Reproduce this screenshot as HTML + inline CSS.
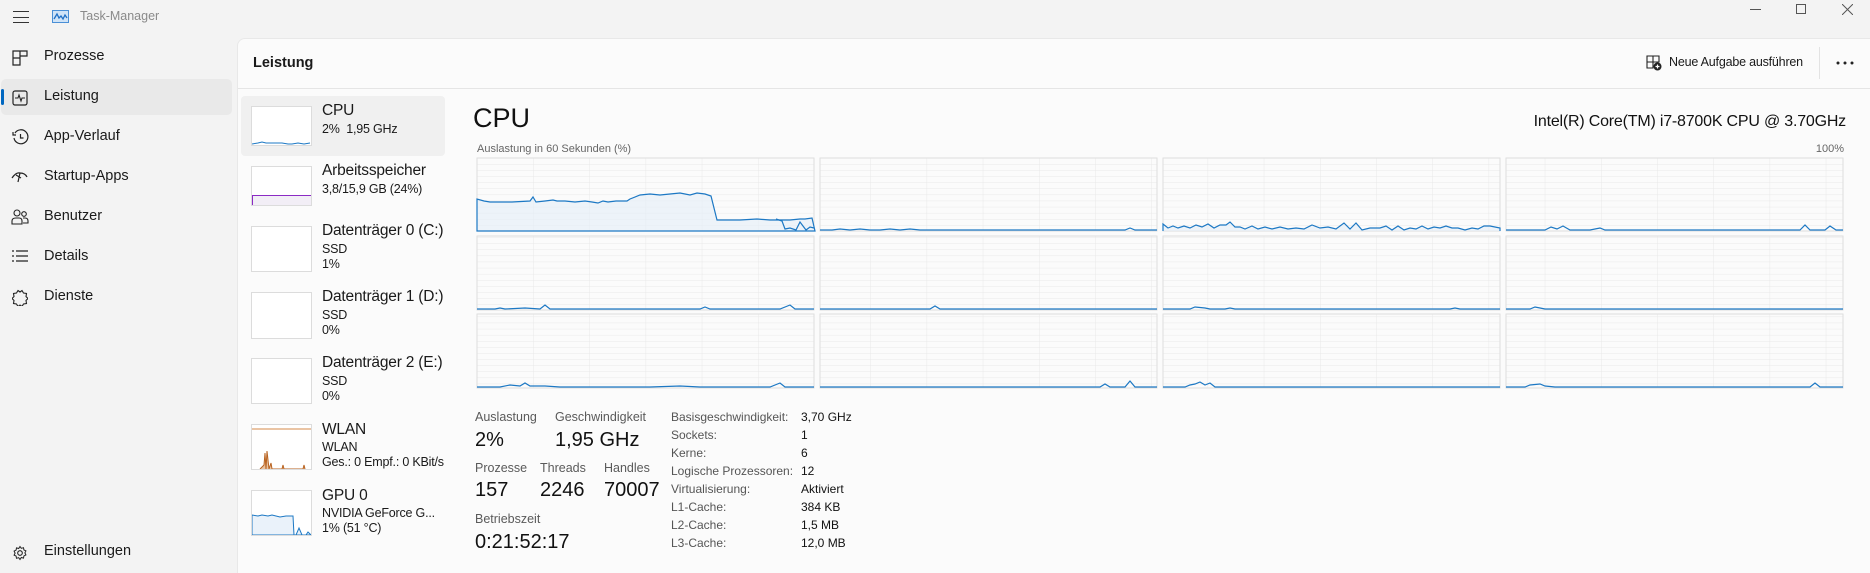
<!DOCTYPE html>
<html><head><meta charset="utf-8"><style>
*{margin:0;padding:0;box-sizing:border-box}
body{width:1870px;height:573px;overflow:hidden;background:#f3f3f3;font-family:"Segoe UI","Liberation Sans",sans-serif;color:#1a1a1a;position:relative}
.a{position:absolute;white-space:nowrap}
.nav{font-size:14.5px;color:#1a1a1a}
.panel{position:absolute;left:237px;top:38px;width:1633px;height:535px;background:#fbfbfb;border-top-left-radius:8px;border:1px solid #e8e8e8;border-right:none;border-bottom:none}
.t1{font-size:15.5px;color:#1a1a1a;letter-spacing:-0.2px}
.t2{font-size:12.5px;color:#1a1a1a;letter-spacing:-0.2px}
.thumb{position:absolute;left:251px;width:61px;background:#fff;border:1px solid #dcdcdc}
.lbl{font-size:12.5px;color:#5a5a5a}
.val{font-size:20px;color:#111}
.k{font-size:12px;color:#555}
.v{font-size:12px;color:#111}
</style></head><body>
<div class="a" style="left:13px;top:11px;width:16px;height:12px;border-top:1.3px solid #333;border-bottom:1.3px solid #333"></div>
<div class="a" style="left:13px;top:16.5px;width:16px;height:1.3px;background:#333"></div>
<svg class="a" style="left:52px;top:10px" width="17" height="13" viewBox="0 0 17 13"><rect x="0.5" y="0.5" width="16" height="12" fill="#cfe3f7" stroke="#4a8fd6"/><polyline points="2,9 5,4 7,8 9,6 11,9 13,5 15,8" fill="none" stroke="#1f6fc5" stroke-width="1.3"/></svg>
<div class="a" style="left:80px;top:9px;font-size:12.5px;color:#8a8a8a">Task-Manager</div>
<div class="a" style="left:1750px;top:9px;width:11px;height:1px;background:#555"></div>
<div class="a" style="left:1796px;top:4px;width:10px;height:10px;border:1px solid #555"></div>
<svg class="a" style="left:1842px;top:4px" width="11" height="11"><path d="M0 0L11 11M11 0L0 11" stroke="#555" stroke-width="1"/></svg>

<div class="a" style="left:1px;top:79px;width:231px;height:36px;background:#e9e9e9;border-radius:5px"></div>
<div class="a" style="left:1px;top:89px;width:3px;height:16px;background:#0067c0;border-radius:2px"></div>
<svg class="a" style="left:12px;top:50px" width="16" height="16"><path d="M1 1h7v7H1zM8 1h7v5H8zM1 8h7v7H1z" fill="none" stroke="#222" stroke-width="1.2"/></svg>
<div class="a nav" style="left:44px;top:48px">Prozesse</div>
<svg class="a" style="left:12px;top:90px" width="16" height="16"><rect x="1" y="1" width="14" height="14" rx="2" fill="none" stroke="#222" stroke-width="1.2"/><polyline points="3,8 6,8 7,5 9,11 10,8 13,8" fill="none" stroke="#222" stroke-width="1.1"/></svg>
<div class="a nav" style="left:44px;top:88px">Leistung</div>
<svg class="a" style="left:12px;top:129px" width="17" height="17"><path d="M3 4A7 7 0 1 1 2 9" fill="none" stroke="#222" stroke-width="1.2"/><path d="M1 3v3h3" fill="none" stroke="#222" stroke-width="1.2"/><path d="M8.5 5v4h3" fill="none" stroke="#222" stroke-width="1.2"/></svg>
<div class="a nav" style="left:44px;top:128px">App-Verlauf</div>
<svg class="a" style="left:11px;top:170px" width="18" height="14"><path d="M1 8Q5 2 9 3L7 12M9 3Q14 3 16 7M5 5L10 8" fill="none" stroke="#222" stroke-width="1.2"/></svg>
<div class="a nav" style="left:44px;top:168px">Startup-Apps</div>
<svg class="a" style="left:11px;top:209px" width="18" height="17"><circle cx="6" cy="4" r="3" fill="none" stroke="#222" stroke-width="1.1"/><circle cx="13" cy="5" r="2.3" fill="none" stroke="#222" stroke-width="1.1"/><path d="M1 15v-3q0-3 4-3h3q3 0 3 3v3zM12 9h2q3 0 3 3v2h-5" fill="none" stroke="#222" stroke-width="1.1"/></svg>
<div class="a nav" style="left:44px;top:208px">Benutzer</div>
<svg class="a" style="left:12px;top:250px" width="16" height="12"><path d="M0 1h2M0 6h2M0 11h2M4 1h12M4 6h12M4 11h12" stroke="#222" stroke-width="1.2"/></svg>
<div class="a nav" style="left:44px;top:248px">Details</div>
<svg class="a" style="left:12px;top:289px" width="16" height="17"><path d="M6 1.5l2 1.5 2-1.5 1.5 2.5 3 .5-.5 3 2 2-2 2 .5 3-3 .5-1.5 2.5-2-1.5-2 1.5-1.5-2.5-3-.5.5-3-2-2 2-2-.5-3 3-.5z" fill="none" stroke="#222" stroke-width="1.1"/></svg>
<div class="a nav" style="left:44px;top:288px">Dienste</div>
<svg class="a" style="left:12px;top:545px" width="16" height="16"><circle cx="8" cy="8" r="2.3" fill="none" stroke="#222" stroke-width="1.1"/><path d="M8 1.5l1.3 1.8 2.2-.6.4 2.2 2 1-1 2 1 2-2 1-.4 2.2-2.2-.6L8 14.5l-1.3-1.8-2.2.6-.4-2.2-2-1 1-2-1-2 2-1 .4-2.2 2.2.6z" fill="none" stroke="#222" stroke-width="1"/></svg>
<div class="a nav" style="left:44px;top:543px">Einstellungen</div>

<div class="panel"></div>
<div class="a" style="left:238px;top:88px;width:1632px;height:1px;background:#e5e5e5"></div>
<div class="a" style="left:253px;top:55px;font-size:14.5px;font-weight:600">Leistung</div>
<svg class="a" style="left:1646px;top:55px" width="16" height="16"><path d="M1 1h6v6H1zM7 1h6v6H7zM1 7h6v6H1z" fill="none" stroke="#222" stroke-width="1.1"/><circle cx="11.5" cy="11.5" r="4" fill="#222"/><path d="M11.5 9.5v4M9.5 11.5h4" stroke="#fff" stroke-width="1.2"/></svg>
<div class="a" style="left:1669px;top:55px;font-size:12.5px;letter-spacing:-0.2px">Neue Aufgabe ausführen</div>
<div class="a" style="left:1819px;top:47px;width:1px;height:32px;background:#e3e3e3"></div>
<svg class="a" style="left:1836px;top:61px" width="18" height="4"><circle cx="2" cy="2" r="1.5" fill="#222"/><circle cx="9" cy="2" r="1.5" fill="#222"/><circle cx="16" cy="2" r="1.5" fill="#222"/></svg>

<div class="a" style="left:241px;top:96px;width:204px;height:60px;background:#f0f0f0;border-radius:4px"></div>
<div class="thumb" style="top:106px;height:40px"><svg width="59" height="38" style="position:absolute;left:0;top:0"><polyline points="0,37 6,36 10,35 14,36 20,36 26,36 30,36 36,37 40,37 46,36 52,37 58,36" fill="none" stroke="#1c78c4" stroke-width="1"/></svg></div>
<div class="a t1" style="left:322px;top:102px">CPU</div>
<div class="a t2" style="left:322px;top:122px">2%&nbsp; 1,95 GHz</div>

<div class="thumb" style="top:166px;height:40px"><div style="position:absolute;left:0;right:0;top:28px;bottom:0;background:#f2eef6;border-top:1.3px solid #8b2ac4;border-left:1.3px solid #8b2ac4"></div></div>
<div class="a t1" style="left:322px;top:162px">Arbeitsspeicher</div>
<div class="a t2" style="left:322px;top:182px">3,8/15,9 GB (24%)</div>

<div class="thumb" style="top:226px;height:46px"></div>
<div class="a t1" style="left:322px;top:222px">Datenträger 0 (C:)</div>
<div class="a t2" style="left:322px;top:242px">SSD</div>
<div class="a t2" style="left:322px;top:257px">1%</div>

<div class="thumb" style="top:292px;height:47px"></div>
<div class="a t1" style="left:322px;top:288px">Datenträger 1 (D:)</div>
<div class="a t2" style="left:322px;top:308px">SSD</div>
<div class="a t2" style="left:322px;top:323px">0%</div>

<div class="thumb" style="top:358px;height:46px"></div>
<div class="a t1" style="left:322px;top:354px">Datenträger 2 (E:)</div>
<div class="a t2" style="left:322px;top:374px">SSD</div>
<div class="a t2" style="left:322px;top:389px">0%</div>

<div class="thumb" style="top:424px;height:46px"><svg width="59" height="44" style="position:absolute;left:0;top:0"><line x1="0" y1="4" x2="59" y2="4" stroke="#d4884a" stroke-width="1"/><polyline points="8,44 12,40 13,28 14,44 15,26 17,44 19,38 20,44 30,44 31,40 32,44 51,44 52,40 53,44" fill="#e8c2a0" stroke="#b8621f" stroke-width="1"/></svg></div>
<div class="a t1" style="left:322px;top:421px">WLAN</div>
<div class="a t2" style="left:322px;top:440px">WLAN</div>
<div class="a t2" style="left:322px;top:455px">Ges.: 0 Empf.: 0 KBit/s</div>

<div class="thumb" style="top:490px;height:46px"><svg width="59" height="44" style="position:absolute;left:0;top:0"><polygon points="0,44 0,24 6,25 10,24 16,25 20,24 28,26 34,25 41,25 42,44 44,44 47,37 50,44 54,44 56,41 59,44" fill="#eaf2fa" stroke="#1c78c4" stroke-width="1"/></svg></div>
<div class="a t1" style="left:322px;top:487px">GPU 0</div>
<div class="a t2" style="left:322px;top:506px">NVIDIA GeForce G...</div>
<div class="a t2" style="left:322px;top:521px">1% (51 °C)</div>

<div class="a" style="left:473px;top:103px;font-size:27px;color:#111">CPU</div>
<div class="a" style="right:24px;top:113px;font-size:16px;color:#111;letter-spacing:-0.2px">Intel(R) Core(TM) i7-8700K CPU @ 3.70GHz</div>
<div class="a" style="left:477px;top:143px;font-size:11px;color:#666">Auslastung in 60 Sekunden (%)</div>
<div class="a" style="right:26px;top:143px;font-size:11px;color:#666">100%</div>

<svg class="a" style="left:0;top:0" width="1870" height="573">
<defs>
<pattern id="g" x="477" y="158" width="56.2" height="6.1" patternUnits="userSpaceOnUse"><path d="M0 0V6.1M0 0H56.2" stroke="#e8e8e8" stroke-width="1" fill="none"/></pattern>
</defs>
<g>
<rect x="477" y="158" width="337" height="73" fill="url(#g)" stroke="#dedede"/>
<rect x="820" y="158" width="337" height="73" fill="url(#g)" stroke="#dedede"/>
<rect x="1163" y="158" width="337" height="73" fill="url(#g)" stroke="#dedede"/>
<rect x="1506" y="158" width="337" height="73" fill="url(#g)" stroke="#dedede"/>
<rect x="477" y="236" width="337" height="74" fill="url(#g)" stroke="#dedede"/>
<rect x="820" y="236" width="337" height="74" fill="url(#g)" stroke="#dedede"/>
<rect x="1163" y="236" width="337" height="74" fill="url(#g)" stroke="#dedede"/>
<rect x="1506" y="236" width="337" height="74" fill="url(#g)" stroke="#dedede"/>
<rect x="477" y="314" width="337" height="74" fill="url(#g)" stroke="#dedede"/>
<rect x="820" y="314" width="337" height="74" fill="url(#g)" stroke="#dedede"/>
<rect x="1163" y="314" width="337" height="74" fill="url(#g)" stroke="#dedede"/>
<rect x="1506" y="314" width="337" height="74" fill="url(#g)" stroke="#dedede"/>
</g>
<g fill="#e4eef8" fill-opacity="0.6" stroke="#1c78c4" stroke-width="1.2">
<polygon points="477,231 477,199 484,201 490,202 505,202 512,202 530,201 533,197 536,202 545,201 553,200 557,201 565,201 575,202 585,201 592,202 598,203 603,201 608,202 616,201 623,201 627,201 630,199 640,195 650,194 660,195 670,194 680,193 690,195 697,193 705,194 711,196 717,220 730,220 740,220 757,219 770,220 790,220 800,219 805,219 812,218 815,231" />
<polyline fill="none" points="776,219 782,221 785,229 790,228 796,230 800,222 806,230 810,227 814,228"/>
<polyline fill="none" points="820,230 832,230 840,229 850,230 860,229 870,230 880,230 890,229 900,230 910,229 920,230 1125,230 1130,228 1135,230 1157,230"/>
<polyline points="1163,231 1163,224 1168,228 1173,226 1178,228 1184,226 1190,228 1196,225 1202,227 1208,224 1214,228 1220,225 1226,225 1230,222 1235,227 1240,227 1245,229 1252,226 1258,229 1265,227 1272,229 1280,227 1288,229 1296,228 1304,229 1312,225 1320,228 1328,227 1336,229 1344,223 1350,229 1356,223 1362,230 1370,228 1380,228 1386,226 1392,230 1398,226 1404,230 1410,228 1416,229 1422,226 1428,229 1434,227 1440,228 1446,226 1452,228 1458,228 1465,230 1472,228 1478,229 1484,226 1490,226 1500,228 1500,231"/>
<polyline fill="none" points="1506,230 1545,230 1551,227 1557,229 1563,226 1570,230 1590,230 1600,228 1605,230 1800,230 1805,225 1810,230 1825,230 1830,226 1836,230 1843,230"/>
<polyline fill="none" points="477,309 495,309 500,308 505,309 525,308 540,309 545,305 550,309 560,309 600,309 700,309 705,307 710,309 740,309 760,309 780,309 790,305 795,309 814,309"/>
<polyline fill="none" points="820,309 930,309 935,306 940,309 1157,309"/>
<polyline fill="none" points="1163,309 1190,309 1195,307 1205,308 1210,309 1225,309 1230,308 1235,309 1450,309 1455,308 1460,309 1500,309"/>
<polyline fill="none" points="1506,309 1530,309 1535,307 1540,308 1545,309 1843,309"/>
<polyline fill="none" points="477,387 500,387 510,385 520,386 525,383 530,386 545,386 560,387 580,387 620,387 650,387 680,386 700,387 730,387 770,387 780,383 785,387 814,387"/>
<polyline fill="none" points="820,387 1100,387 1105,384 1110,387 1125,387 1130,381 1135,387 1157,387"/>
<polyline fill="none" points="1163,387 1185,387 1190,385 1195,384 1200,382 1205,385 1210,383 1215,387 1240,387 1300,387 1400,387 1420,387 1500,387"/>
<polyline fill="none" points="1506,387 1525,387 1530,385 1540,384 1545,386 1555,387 1700,387 1810,387 1815,383 1820,387 1843,387"/>
</g>
</svg>

<div class="a lbl" style="left:475px;top:410px">Auslastung</div>
<div class="a val" style="left:475px;top:429px">2%</div>
<div class="a lbl" style="left:555px;top:410px">Geschwindigkeit</div>
<div class="a val" style="left:555px;top:429px">1,95 GHz</div>
<div class="a lbl" style="left:475px;top:461px">Prozesse</div>
<div class="a val" style="left:475px;top:479px">157</div>
<div class="a lbl" style="left:540px;top:461px">Threads</div>
<div class="a val" style="left:540px;top:479px">2246</div>
<div class="a lbl" style="left:604px;top:461px">Handles</div>
<div class="a val" style="left:604px;top:479px">70007</div>
<div class="a lbl" style="left:475px;top:512px">Betriebszeit</div>
<div class="a val" style="left:475px;top:531px">0:21:52:17</div>

<div class="a k" style="left:671px;top:410px">Basisgeschwindigkeit:</div><div class="a v" style="left:801px;top:410px">3,70 GHz</div>
<div class="a k" style="left:671px;top:428px">Sockets:</div><div class="a v" style="left:801px;top:428px">1</div>
<div class="a k" style="left:671px;top:446px">Kerne:</div><div class="a v" style="left:801px;top:446px">6</div>
<div class="a k" style="left:671px;top:464px">Logische Prozessoren:</div><div class="a v" style="left:801px;top:464px">12</div>
<div class="a k" style="left:671px;top:482px">Virtualisierung:</div><div class="a v" style="left:801px;top:482px">Aktiviert</div>
<div class="a k" style="left:671px;top:500px">L1-Cache:</div><div class="a v" style="left:801px;top:500px">384 KB</div>
<div class="a k" style="left:671px;top:518px">L2-Cache:</div><div class="a v" style="left:801px;top:518px">1,5 MB</div>
<div class="a k" style="left:671px;top:536px">L3-Cache:</div><div class="a v" style="left:801px;top:536px">12,0 MB</div>
</body></html>
